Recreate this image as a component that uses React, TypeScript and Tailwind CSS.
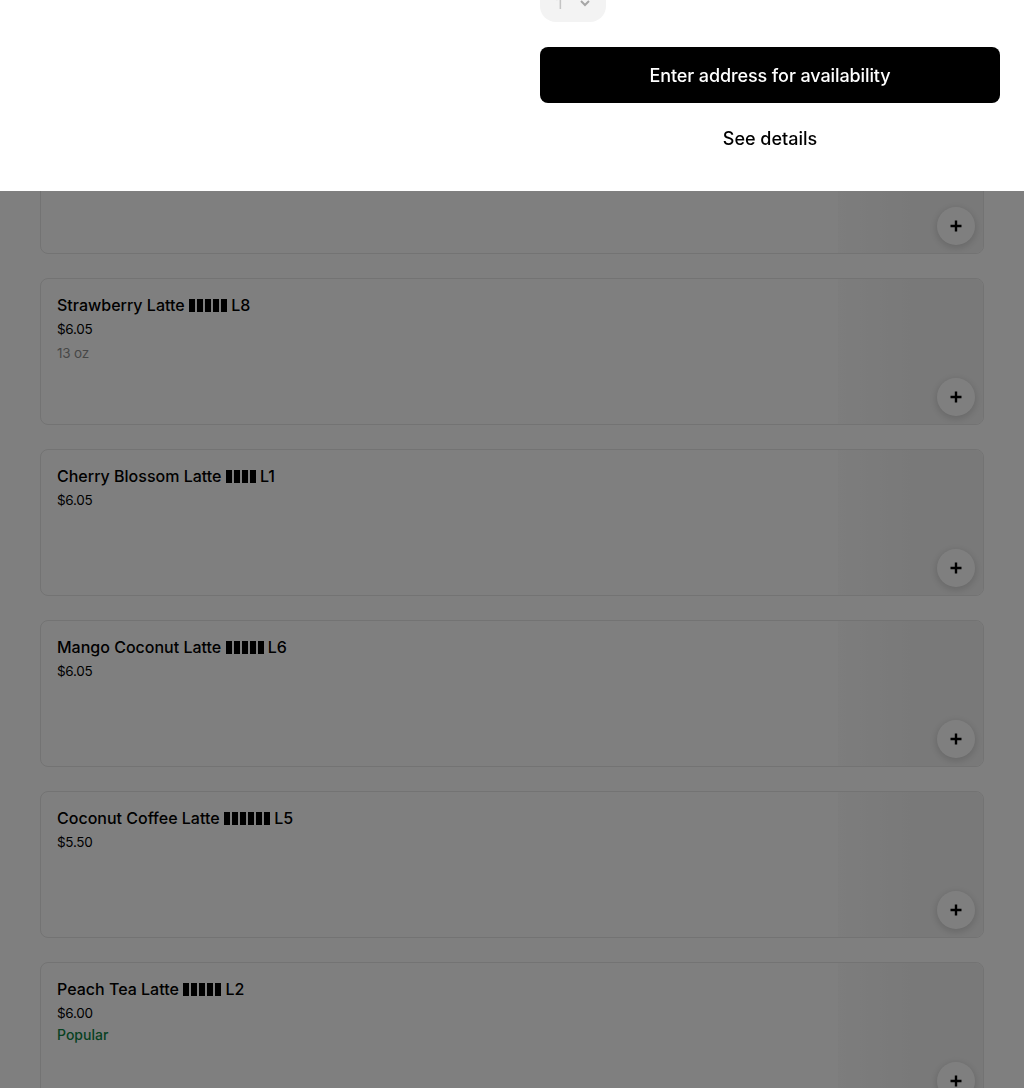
import React from "react";

type Item = { name: string; boxes: number; code: string; price: string; note?: string; popular?: boolean };

const items: Item[] = [
  { name: "Matcha Latte", boxes: 4, code: "L3", price: "$6.05" },
  { name: "Strawberry Latte", boxes: 5, code: "L8", price: "$6.05", note: "13 oz" },
  { name: "Cherry Blossom Latte", boxes: 4, code: "L1", price: "$6.05" },
  { name: "Mango Coconut Latte", boxes: 5, code: "L6", price: "$6.05" },
  { name: "Coconut Coffee Latte", boxes: 6, code: "L5", price: "$5.50" },
  { name: "Peach Tea Latte", boxes: 5, code: "L2", price: "$6.00", popular: true },
];

function Plus() {
  return (
    <svg width="14" height="14" viewBox="0 0 14 14" fill="none">
      <path d="M7 1.5v11M1.5 7h11" stroke="#000" strokeWidth="2.4" />
    </svg>
  );
}

function Boxes({ n }: { n: number }) {
  return (
    <span className="inline-flex gap-[2px] align-[-1px]">
      {Array.from({ length: n }).map((_, i) => (
        <span key={i} className="inline-block h-[13px] w-[6px] bg-black" />
      ))}
    </span>
  );
}

function Card({ item }: { item: Item }) {
  return (
    <div className="flex h-[147px] rounded-lg border border-[#e6e6e6] bg-white overflow-hidden">
      <div className="flex-1 p-4">
        <div className="text-[16px] leading-5 font-[450] text-black">
          {item.name} <Boxes n={item.boxes} /> {item.code}
        </div>
        <div className="mt-1 text-[13.5px] leading-5 font-normal tracking-[-0.3px] text-black">{item.price}</div>
        {item.note && <div className="mt-1 text-[13.5px] leading-5 tracking-[-0.2px] text-[#8f8f8f]">{item.note}</div>}
        {item.popular && <div className="mt-0.5 text-[14px] leading-5 font-[450] text-[#0e8345]">Popular</div>}
      </div>
      <div className="relative w-[145px] bg-gradient-to-r from-[#fafafa] via-[#f3f3f3] to-[#f3f3f3]">
        <button className="absolute bottom-2 right-2 flex h-[38px] w-[38px] items-center justify-center rounded-full bg-white shadow-[0_2px_8px_rgba(0,0,0,0.18)]">
          <Plus />
        </button>
      </div>
    </div>
  );
}

export default function App() {
  return (
    <div className="relative min-h-screen bg-white" style={{ fontFamily: "Inter, 'Liberation Sans', sans-serif" }}>
      <div className="flex flex-col gap-6 px-10 pt-[107px] pb-10">
        {items.map((it) => (
          <Card key={it.name} item={it} />
        ))}
      </div>
      <div className="fixed inset-0 bg-black/50" />
      <div className="fixed inset-x-0 top-0 h-[191px] bg-white">
        <div className="ml-[540px] mr-6 flex flex-col">
          <div className="-mt-[16px] flex h-[38px] w-[66px] items-center gap-4 rounded-2xl bg-[#f3f3f3] pl-4">
            <span className="text-[16px] text-[#c4c4c4]">1</span>
            <svg width="12" height="8" viewBox="0 0 12 8" fill="none">
              <path d="M2 2l4 4 4-4" stroke="#a6a6a6" strokeWidth="2" />
            </svg>
          </div>
          <button className="mt-[25px] h-14 w-full rounded-lg bg-black text-[18px] font-[450] tracking-[-0.1px] text-white">
            Enter address for availability
          </button>
          <div className="mt-6 text-center text-[18px] leading-6 font-[450] text-black">See details</div>
        </div>
      </div>
    </div>
  );
}
